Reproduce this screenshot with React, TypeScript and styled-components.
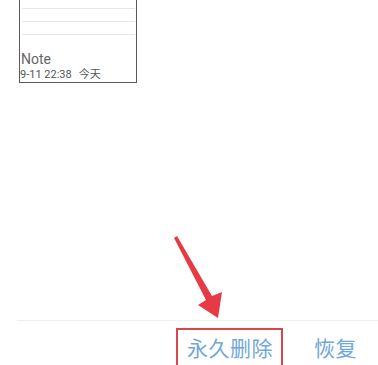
import styled, { createGlobalStyle } from 'styled-components'

const GlobalStyle = createGlobalStyle`
    html, body {
        margin: 0;
        padding: 0;
        background: #ffffff;
        overflow: hidden;
    }
    body {
        font-family: Roboto, "Noto Sans CJK SC", sans-serif;
    }
`

const Page = styled.div`
    position: relative;
    width: 378px;
    height: 365px;
    display: flex;
    flex-direction: column;
    overflow: hidden;
`

const NoteCard = styled.div`
    margin: -20px 0 0 19px;
    width: 118px;
    height: 103px;
    border: 1px solid #5a5a5a;
    display: flex;
    flex-direction: column;
    box-sizing: border-box;
`

const Lines = styled.div`
    display: flex;
    flex-direction: column;
    gap: 12px;
    padding: 27px 1px 0 2px;
`

const Line = styled.div`
    height: 1px;
    background: #e6e6e6;
`

const NoteTitle = styled.div`
    margin-top: 17px;
    padding-left: 1px;
    font-size: 14px;
    line-height: 15px;
    color: #666666;
`

const NoteDate = styled.div`
    margin-top: 1px;
    padding-left: 0;
    font-size: 11px;
    line-height: 13px;
    color: #555555;
    display: flex;
    gap: 7px;
    white-space: nowrap;
`

const Spacer = styled.div`
    flex: 1;
`

const BottomBar = styled.div`
    box-sizing: border-box;
    margin-left: 17px;
    height: 45px;
    flex-shrink: 0;
    border-top: 1px solid #f0f0f0;
    display: flex;
    align-items: flex-start;
    padding: 7px 0 0 159px;
    gap: 20px;
`

const ActionButton = styled.button<{ $highlight?: boolean }>`
    flex-shrink: 0;
    white-space: nowrap;
    font-family: "Noto Sans CJK SC", sans-serif;
    font-size: 21px;
    line-height: 28px;
    color: #6fa8d9;
    background: none;
    margin: 0;
    padding: 3px 8px 10px 9px;
    border: 2px solid ${p => p.$highlight ? '#d9454d' : 'transparent'};
    letter-spacing: 0.5px;
`

const Arrow = styled.svg`
    position: absolute;
    left: 165px;
    top: 230px;
    width: 70px;
    height: 95px;
`

export default function App() {
    return <Page>
        <GlobalStyle />
        <NoteCard>
            <Lines>
                <Line />
                <Line />
                <Line />
            </Lines>
            <NoteTitle>Note</NoteTitle>
            <NoteDate><span>9-11 22:38</span><span>今天</span></NoteDate>
        </NoteCard>
        <Spacer />
        <BottomBar>
            <ActionButton $highlight>永久删除</ActionButton>
            <ActionButton>恢复</ActionButton>
        </BottomBar>
        <Arrow viewBox="0 0 70 95">
            <polygon points="9,8 12,6 47,66 57,62 53,88 33,75 41,70" fill="#e63a45" />
        </Arrow>
    </Page>
}
